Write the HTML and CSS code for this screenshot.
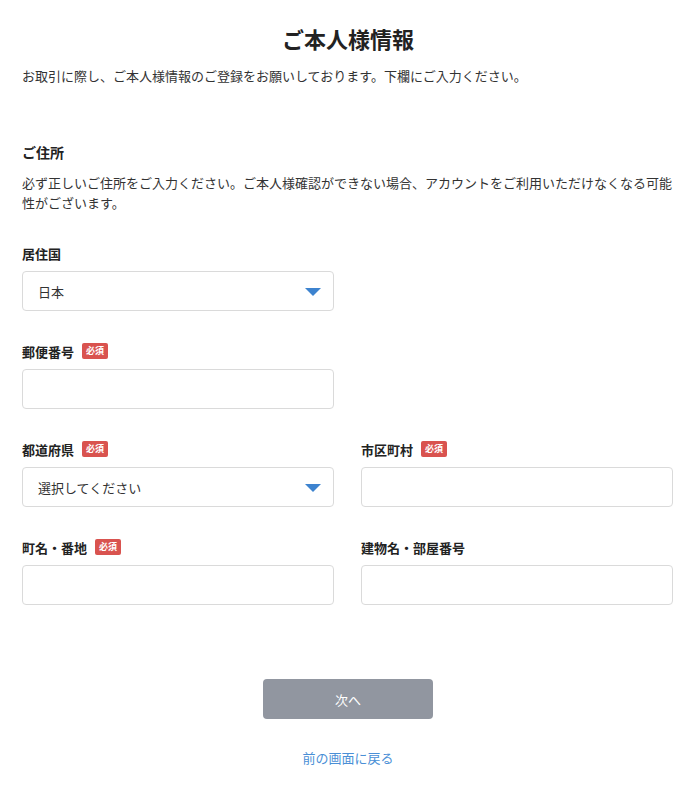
FILE: index.html
```html
<!DOCTYPE html>
<html lang="ja">
<head>
<meta charset="utf-8">
<title>ご本人様情報</title>
<link rel="stylesheet" href="styles.css">
</head>
<body>
<main class="page">
  <h1 class="title">ご本人様情報</h1>
  <p class="intro">お取引に際し、ご本人様情報のご登録をお願いしております。下欄にご入力ください。</p>

  <section class="section">
    <h2 class="section-title">ご住所</h2>
    <p class="section-desc">必ず正しいご住所をご入力ください。ご本人様確認ができない場合、アカウントをご利用いただけなくなる可能性がございます。</p>

    <div class="grid">
      <div class="field">
        <div class="label">居住国</div>
        <div class="select"><span>日本</span><span class="arrow"></span></div>
      </div>
      <div></div>

      <div class="field">
        <div class="label">郵便番号<span class="badge">必須</span></div>
        <div class="input"></div>
      </div>
      <div></div>

      <div class="field">
        <div class="label">都道府県<span class="badge">必須</span></div>
        <div class="select"><span>選択してください</span><span class="arrow"></span></div>
      </div>
      <div class="field">
        <div class="label">市区町村<span class="badge">必須</span></div>
        <div class="input"></div>
      </div>

      <div class="field">
        <div class="label">町名・番地<span class="badge">必須</span></div>
        <div class="input"></div>
      </div>
      <div class="field">
        <div class="label">建物名・部屋番号</div>
        <div class="input"></div>
      </div>
    </div>
  </section>

  <div class="actions">
    <button class="next" type="button">次へ</button>
    <a class="back" href="#">前の画面に戻る</a>
  </div>
</main>
</body>
</html>
```

FILE: styles.css
```css
* { box-sizing: border-box; }
html, body { margin: 0; padding: 0; background: #fff; }
body {
  font-family: "Noto Sans CJK JP", "Noto Sans", sans-serif;
  color: #333;
  font-size: 13px;
}
.page {
  width: 652px;
  margin-left: 22px;
  padding-top: 23px;
}
.title {
  margin: 0;
  font-size: 22px;
  line-height: 30px;
  font-weight: 700;
  text-align: center;
  color: #222;
}
.intro {
  margin: 13px 0 0;
  line-height: 20px;
  font-size: 13px;
}
.section { margin-top: 56px; }
.section-title {
  margin: 0;
  font-size: 14px;
  line-height: 20px;
  font-weight: 700;
  color: #222;
}
.section-desc {
  margin: 11px 0 0;
  line-height: 20px;
  font-size: 13px;
}
.grid {
  margin-top: 30px;
  display: grid;
  grid-template-columns: 312px 312px;
  column-gap: 27px;
  row-gap: 30px;
}
.label {
  display: flex;
  align-items: center;
  height: 20px;
  font-weight: 700;
  font-size: 13px;
  color: #222;
  margin-bottom: 8px;
}
.badge {
  margin-left: 8px;
  background: #d9534f;
  color: #fff;
  font-size: 9px;
  line-height: 16px;
  height: 16px;
  padding: 0 4px;
  border-radius: 2px;
  font-weight: 700;
}
.select, .input {
  height: 40px;
  border: 1px solid #dadada;
  border-radius: 4px;
  background: #fff;
}
.select {
  display: flex;
  align-items: center;
  justify-content: space-between;
  padding: 0 12px 0 15px;
  font-size: 13px;
  color: #333;
}
.arrow {
  width: 0;
  height: 0;
  border-left: 8px solid transparent;
  border-right: 8px solid transparent;
  border-top: 8px solid #3d83cf;
  margin-top: 2px;
}
.actions {
  margin-top: 74px;
  display: flex;
  flex-direction: column;
  align-items: center;
}
.next {
  width: 170px;
  height: 40px;
  border: none;
  border-radius: 4px;
  background: #9196a0;
  color: #fff;
  font-family: inherit;
  font-size: 13px;
}
.back {
  margin-top: 29px;
  line-height: 20px;
  font-size: 13px;
  color: #4a8fd6;
  text-decoration: none;
}
```
